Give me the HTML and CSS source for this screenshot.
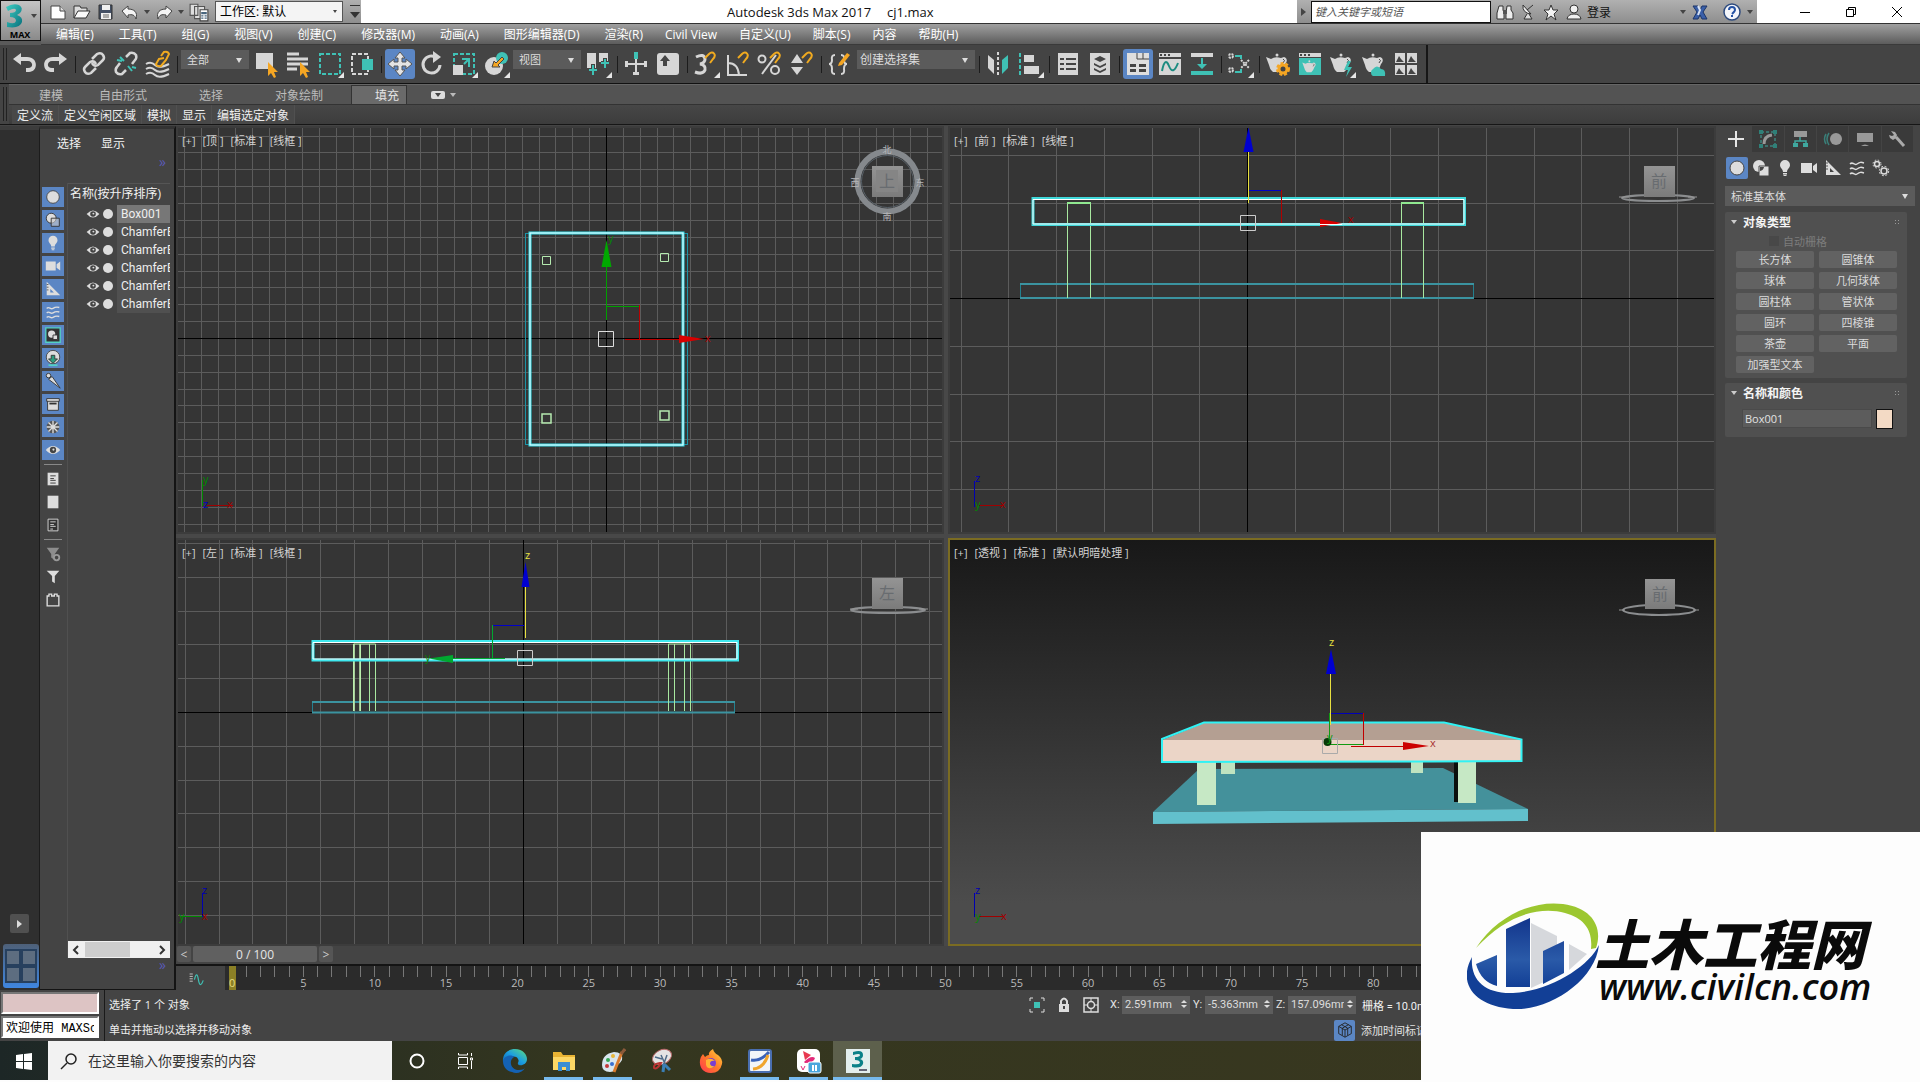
FILE: index.html
```html
<!DOCTYPE html>
<html lang="zh-CN">
<head>
  <meta charset="UTF-8" />
  <title>Autodesk 3ds Max 2017 - cj1.max</title>
  <link rel="stylesheet" href="styles.css">
</head>
<body>

<!-- shared icons -->
<svg class="defs" aria-hidden="true">
  <defs>
    <linearGradient id="gTeal" x1="0" y1="0" x2="1" y2="1"><stop offset="0" stop-color="#3fd0c4"/><stop offset="1" stop-color="#08707c"/></linearGradient>
    <linearGradient id="gCube" x1="0" y1="0" x2="0" y2="1"><stop offset="0" stop-color="#949494"/><stop offset="1" stop-color="#7b7b7b"/></linearGradient>
    <linearGradient id="gBlue" x1="0" y1="0" x2="0" y2="1"><stop offset="0" stop-color="#12358c"/><stop offset="0.6" stop-color="#2a5aa8"/><stop offset="1" stop-color="#123f96"/></linearGradient>
    <linearGradient id="gEdge" x1="0" y1="1" x2="1" y2="0"><stop offset="0" stop-color="#0c59a4"/><stop offset="0.5" stop-color="#1b9de2"/><stop offset="1" stop-color="#5fe07a"/></linearGradient>
    <linearGradient id="gFox" x1="0" y1="1" x2="1" y2="0"><stop offset="0" stop-color="#ff3750"/><stop offset="0.5" stop-color="#ff7a2a"/><stop offset="1" stop-color="#ffd93c"/></linearGradient>
  </defs>
  <symbol id="i-circle" viewBox="0 0 20 20"><circle cx="10" cy="10" r="7" fill="#ddd" stroke="#444"/></symbol>
  <symbol id="i-shapes" viewBox="0 0 20 20"><circle cx="8" cy="8" r="6" fill="#ddd"/><path d="M8 8h10v10H8z" fill="#ddd" stroke="#444"/><path d="M9 13V9h4a5 5 0 0 1-4 4z" fill="#444"/></symbol>
  <symbol id="i-bulb" viewBox="0 0 20 20"><path d="M10 2a5 5 0 0 1 5 5c0 3-3 4-3 7H8c0-3-3-4-3-7a5 5 0 0 1 5-5z" fill="#ddd"/><path d="M8 15h4v1.500H8zM8.500 17h3v1h-3z" fill="#ddd"/></symbol>
  <symbol id="i-camera" viewBox="0 0 20 20"><path d="M2 5h11v10H2zM14 8l4-3v10l-4-3z" fill="#ddd"/></symbol>
  <symbol id="i-ruler" viewBox="0 0 20 20"><path d="M3 2v15h15zM7 10l4 4H7z" fill="#ddd" fill-rule="evenodd"/><path d="M3 5h2M3 8h2M3 11h2" stroke="#555"/></symbol>
  <symbol id="i-waves" viewBox="0 0 20 20"><path d="M3 6c3-3 4 2 7 0s4-2 7-1M3 11c3-3 4 2 7 0s4-2 7-1M3 16c3-3 4 2 7 0s4-2 7-1" fill="none" stroke="#ddd" stroke-width="1.500"/></symbol>
  <symbol id="i-gears" viewBox="0 0 20 20"><g fill="none" stroke="#ddd"><circle cx="6" cy="6" r="2.500" stroke-width="1.500"/><circle cx="6" cy="6" r="4" stroke-dasharray="1.500 1.700"/><circle cx="13" cy="13" r="3" stroke-width="1.500"/><circle cx="13" cy="13" r="4.700" stroke-dasharray="2 1.700"/></g></symbol>
  <symbol id="i-eye" viewBox="0 0 20 20"><path d="M2 10q8-9 16 0q-8 9-16 0z" fill="#ddd"/><circle cx="10" cy="10" r="3.500" fill="#444"/><circle cx="10.500" cy="9.500" r="1.200" fill="#ddd"/></symbol>
  <symbol id="i-teapot" viewBox="0 0 28 28"><path d="M2 7l5 2q4-3 10-1l3-1c3 1 4 4 1 7q-2 6-5 8H9q-3-2-4-7z" fill="#d6d6d6"/><path d="M19 9q3 1 0 4" fill="none" stroke="#444"/><circle cx="13" cy="5" r="1.500" fill="#d6d6d6"/></symbol>
  <symbol id="i-chev" viewBox="0 0 28 28"><path d="M28 22v6h-6z" fill="#e6e6e6"/></symbol>
  <symbol id="i-magnet" viewBox="0 0 14 14"><path d="M2 7l4-4c4-4 8 1 4 5l-3 4" fill="none" stroke="#f0aa20" stroke-width="2"/></symbol>
  <symbol id="i-curve" viewBox="0 0 20 20"><path d="M2 5h4M2 8h4M2 11h4M2 14h4" stroke="#ddd"/><path d="M8 12q3-12 5 0t6 1" fill="none" stroke="#3fc1b5" stroke-width="1.500"/></symbol>
</svg>

<div class="app">
<header class="header">
  <button class="app-btn" type="button" aria-label="MAX">
    <svg width="28" height="28" viewBox="0 0 28 28"><path d="M5 5Q12 1 18 3q5 3 1 8l-3 2q6 2 5 7-2 7-15 5V20q8 3 9-1 0-4-6-4v-4q6 0 6-3-1-3-8 1z" fill="url(#gTeal)"/></svg>
    <span>MAX</span>
    <i class="tri"></i>
  </button>
  <div class="header-main">
    <div class="titlebar">
      <div class="quick">
        <button type="button" aria-label="新建"><svg width="18" height="18" viewBox="0 0 18 18"><path d="M2 3h9l5 5v8H2z" fill="#fff" stroke="#444"/><path d="M11 3v5h5" fill="#ddd" stroke="#444"/></svg></button>
        <button type="button" aria-label="打开"><svg width="18" height="18" viewBox="0 0 18 18"><path d="M1 15V3h6l1 2h6v3" fill="#ddd" stroke="#333"/><path d="M1 15l4-7h12l-4 7z" fill="#fafafa" stroke="#333"/></svg></button>
        <button type="button" aria-label="保存"><svg width="18" height="18" viewBox="0 0 18 18"><path d="M2 2h13v14H2z" fill="#445065" stroke="#333"/><path d="M5 2h8v5H5zM4 10h10v6H4z" fill="#f0f0f0"/><path d="M6 12h6M6 14h6" stroke="#666"/></svg></button>
        <button type="button" aria-label="撤消"><svg width="18" height="18" viewBox="0 0 18 18"><path d="M1 8l6-5v3c6 0 10 3 8 10-1-4-4-5-8-4v3z" fill="#f5f5f5" stroke="#444"/></svg></button>
        <i class="tri"></i>
        <button type="button" aria-label="重做"><svg width="18" height="18" viewBox="0 0 18 18"><path d="M17 8l-6-5v3C5 6 1 9 3 16c1-4 4-5 8-4v3z" fill="#f5f5f5" stroke="#444"/></svg></button>
        <i class="tri"></i>
        <button type="button" aria-label="项目"><svg width="20" height="20" viewBox="0 0 18 18"><path d="M1 2h7v10H1zM5 4h9v11H5z" fill="#ddd" stroke="#555"/><path d="M10 7h7v10h-7z" fill="#fff" stroke="#444"/><path d="M11 9h5v2h-5zM11 12h2v1h-2zM14 12h2v1h-2zM11 14h2v1h-2zM14 14h2v1h-2z" fill="#48657d"/></svg></button>
        <span class="sel sel-light"><select aria-label="工作区"><option>工作区: 默认</option></select></span>
        <button class="more" type="button" aria-label="更多"><i class="tri tri-bar"></i></button>
      </div>
      <div class="title"><span>Autodesk 3ds Max 2017</span><span>cj1.max</span></div>
      <div class="info">
        <i class="tri tri-right"></i>
        <input type="text" aria-label="搜索" placeholder="键入关键字或短语">
        <button type="button" aria-label="查找"><svg width="18" height="18" viewBox="0 0 18 18"><path d="M3 3h4v4l1 3v6H1v-6zM11 3h4v4l2 3v6h-7v-6z" fill="#eee" stroke="#333"/><path d="M7 7h4v4H7z" fill="#555"/></svg></button>
        <button type="button" aria-label="通讯"><svg width="18" height="18" viewBox="0 0 18 18"><path d="M4 2q-1 8 8 9z" fill="#eee" stroke="#333"/><path d="M8 7l6-5M8 11l-3 5h8l-3-5" fill="#ddd" stroke="#333"/></svg></button>
        <button type="button" aria-label="收藏"><svg width="18" height="18" viewBox="0 0 18 18"><path d="M9 2l2 5h5l-4 4 2 6-5-4-5 4 2-6-4-4h5z" fill="#f4f4f4" stroke="#333"/></svg></button>
        <button class="login" type="button"><svg width="18" height="18" viewBox="0 0 18 18"><circle cx="9" cy="6" r="4" fill="#f0f0f0" stroke="#333"/><path d="M2 16q1-5 7-5t7 5z" fill="#f0f0f0" stroke="#333"/></svg>登录</button>
        <i class="tri"></i>
        <button class="exchange" type="button" aria-label="Exchange"><svg width="18" height="18" viewBox="0 0 18 18"><path d="M2 3h5l2 4 2-4h5l-4 6 4 7h-5l-2-4-2 4H2l4-7z" fill="#3a5fa8" stroke="#1c3568"/><path d="M7 3l2 4-2 5" fill="none" stroke="#d8e2f2" stroke-width="2"/></svg></button>
        <button type="button" aria-label="帮助"><svg width="20" height="20" viewBox="0 0 20 20"><circle cx="10" cy="10" r="8" fill="#f4f6fb" stroke="#2d4a7d" stroke-width="1.500"/><path d="M7 8q0-3 3-3t3 3q0 1-3 4m0 1v2" fill="none" stroke="#2552a5" stroke-width="2"/></svg></button>
        <i class="tri"></i>
      </div>
      <div class="winctl">
        <button type="button" aria-label="最小化"><svg width="12" height="12" viewBox="0 0 12 12"><path d="M1 6.500h10" stroke="#000"/></svg></button>
        <button type="button" aria-label="还原"><svg width="12" height="12" viewBox="0 0 12 12"><path d="M1.500 3.500h7v7h-7zM3.500 3V1.500h7v7H9" fill="none" stroke="#000"/></svg></button>
        <button type="button" aria-label="关闭"><svg width="12" height="12" viewBox="0 0 12 12"><path d="M1 1l10 10M11 1L1 11" stroke="#000"/></svg></button>
      </div>
    </div>
    <nav class="menubar">
      <div class="menu-group">
        <a href="#">编辑(E)</a><a href="#">工具(T)</a><a href="#">组(G)</a><a href="#">视图(V)</a><a href="#">创建(C)</a><a href="#">修改器(M)</a><a href="#">动画(A)</a><a href="#">图形编辑器(D)</a><a href="#">渲染(R)</a>
      </div>
      <div class="menu-group menu-group-2">
        <a href="#">Civil View</a><a href="#">自定义(U)</a><a href="#">脚本(S)</a><a href="#">内容</a><a href="#">帮助(H)</a>
      </div>
    </nav>
  </div>
</header>

<div class="toolbar">
  <i class="grip"></i>
  <button type="button" aria-label="撤消"><svg viewBox="0 0 28 28"><path d="M3 9l8-6v4h6c12 0 11 15 2 15h-3v-4h2c6 0 5-7 0-7h-7v4z" fill="#d6d6d6"/></svg></button>
  <button type="button" aria-label="重做"><svg viewBox="0 0 28 28"><path d="M25 9l-8-6v4h-6C-1 7 0 22 9 22h3v-4h-2c-6 0-5-7 0-7h7v4z" fill="#d6d6d6"/></svg></button>
  <i class="sep"></i>
  <button type="button" aria-label="链接"><svg viewBox="0 0 28 28"><g fill="none" stroke="#d6d6d6" stroke-width="2.500"><path d="M12 9l5-5q4-2 6 1 2 3 0 5l-5 5q-4 2-6-2"/><path d="M16 18l-5 5q-4 2-6-1-2-3 0-5l5-5q4-2 6 2"/></g></svg></button>
  <button type="button" aria-label="断开链接"><svg viewBox="0 0 28 28"><g fill="none" stroke="#d6d6d6" stroke-width="2.500"><path d="M14 7l4-4q4-1 6 2 1 3-1 5l-3 4"/><path d="M14 20l-4 4q-4 1-6-2-1-3 1-5l3-4"/></g><path d="M8 7l4 4M16 16l4 5M20 17l4 1M5 10l5 1" stroke="#3fc1b5" stroke-width="2"/></svg></button>
  <button type="button" aria-label="绑定"><svg viewBox="0 0 28 28"><path d="M2 14q5-3 9 1t14-1M2 19q5-3 9 1t14-1M2 24q5-3 9 1t14-1" fill="none" stroke="#d6d6d6" stroke-width="2"/><path d="M17 6l3-4q4-1 5 2l-3 6-5 6q-4 1-5-2l3-5 5-1" fill="none" stroke="#f0aa20" stroke-width="2"/></svg></button>
  <i class="sep"></i>
  <span class="sel sel-filter"><select aria-label="选择过滤器"><option>全部</option></select></span>
  <button type="button" aria-label="选择对象"><svg viewBox="0 0 28 28"><path d="M4 3h17v16H4z" fill="#d6d6d6"/><path d="M16 12v14l3-3 3 5 2-1-2-5h4z" fill="#f5a623"/></svg></button>
  <button type="button" aria-label="按名称选择"><svg viewBox="0 0 28 28"><path d="M3 4h12M3 9h21M3 14h21M3 19h10" stroke="#d6d6d6" stroke-width="3"/><path d="M16 12v14l3-3 3 5 2-1-2-5h4z" fill="#f5a623"/></svg></button>
  <button type="button" aria-label="矩形选择区域"><svg viewBox="0 0 28 28"><path d="M4 4h20v20H4z" fill="none" stroke="#3fc1b5" stroke-width="2" stroke-dasharray="4 2"/><use href="#i-chev"/></svg></button>
  <button type="button" aria-label="窗口/交叉"><svg viewBox="0 0 28 28"><path d="M4 4h16v20H4z" fill="none" stroke="#d6d6d6" stroke-width="2" stroke-dasharray="4 2"/><path d="M14 9h11v11H14z" fill="#3fc1b5"/></svg></button>
  <i class="sep"></i>
  <button class="on" type="button" aria-label="选择并移动"><svg viewBox="0 0 28 28"><path d="M14 2l5 6h-3v4h4V9l6 5-6 5v-3h-4v4h3l-5 6-5-6h3v-4H8v3l-6-5 6-5v3h4V8H9z" fill="#e4e4e4" stroke="#555"/></svg></button>
  <button type="button" aria-label="选择并旋转"><svg viewBox="0 0 28 28"><path d="M19 8a8.500 8.500 0 1 0 3 7" fill="none" stroke="#d6d6d6" stroke-width="3"/><path d="M15 1l8 6-8 6z" fill="#d6d6d6"/></svg></button>
  <button type="button" aria-label="选择并缩放"><svg viewBox="0 0 28 28"><path d="M4 4h20v20H4z" fill="none" stroke="#3fc1b5" stroke-width="2" stroke-dasharray="4 2"/><path d="M3 15h10v10H3z" fill="#d6d6d6"/><path d="M12 9h7v8M14 14l5-5" fill="none" stroke="#3fc1b5" stroke-width="2"/><use href="#i-chev"/></svg></button>
  <button type="button" aria-label="选择并放置"><svg viewBox="0 0 28 28"><circle cx="12" cy="16" r="9" fill="#d6d6d6"/><circle cx="20" cy="8" r="6" fill="#3fc1b5"/><path d="M10 17l2-6 2 2 6-6 2 2-6 6 2 2z" fill="#f5a623" stroke="#444"/><use href="#i-chev"/></svg></button>
  <span class="sel sel-filter"><select aria-label="参考坐标系"><option>视图</option></select></span>
  <button type="button" aria-label="使用轴点中心"><svg viewBox="0 0 28 28"><path d="M3 3h9v15H3zM15 3h9v9h-9z" fill="#d6d6d6"/><path d="M9 14v11M5 20h8M21 8v11M17 13h8" stroke="#444" stroke-width="4"/><path d="M9 15v10M5 20h8M21 9v9M17 13h8" stroke="#3fc1b5" stroke-width="2"/><use href="#i-chev"/></svg></button>
  <i class="sep"></i>
  <button type="button" aria-label="选择并操纵"><svg viewBox="0 0 28 28"><path d="M14 8v17M4 14h20" stroke="#d6d6d6" stroke-width="2"/><path d="M3 11h3v6H3zM22 11h3v6h-3zM11 22h6v3h-6z" fill="#d6d6d6"/><path d="M12 2h4v7h-4z" fill="#3fc1b5"/></svg></button>
  <button type="button" aria-label="键盘快捷键覆盖"><svg viewBox="0 0 28 28"><rect x="3" y="3" width="22" height="22" rx="3" fill="#d6d6d6"/><path d="M11 5l5 6h-3v5H9v-5H6z" fill="#444"/></svg></button>
  <i class="sep"></i>
  <button type="button" aria-label="捕捉开关"><svg viewBox="0 0 28 28"><path d="M4 7q8-4 9 2 0 4-5 5 6 1 5 6-2 5-10 2" fill="none" stroke="#d6d6d6" stroke-width="3"/><use href="#i-magnet" x="11" y="1" width="14" height="14"/><use href="#i-chev"/></svg></button>
  <button type="button" aria-label="角度捕捉"><svg viewBox="0 0 28 28"><path d="M4 5v20h19M4 13q10 0 11 12" fill="none" stroke="#d6d6d6" stroke-width="2"/><use href="#i-magnet" x="12" y="1" width="14" height="14"/></svg></button>
  <button type="button" aria-label="百分比捕捉"><svg viewBox="0 0 28 28"><path d="M20 5L6 24" stroke="#d6d6d6" stroke-width="2"/><circle cx="6" cy="9" r="3.500" fill="none" stroke="#d6d6d6" stroke-width="2"/><circle cx="19" cy="20" r="4" fill="none" stroke="#d6d6d6" stroke-width="2"/><use href="#i-magnet" x="12" y="1" width="14" height="14"/></svg></button>
  <button type="button" aria-label="微调器捕捉"><svg viewBox="0 0 28 28"><path d="M3 13l6-9 6 9zM3 17h12l-6 8z" fill="#d6d6d6"/><use href="#i-magnet" x="12" y="1" width="14" height="14"/></svg></button>
  <i class="sep"></i>
  <button type="button" aria-label="编辑命名选择集"><svg viewBox="0 0 28 28"><path d="M9 5q-4 0-3 5 0 4-3 4 3 0 3 5-1 5 3 5M15 5q4 0 3 5 0 4 3 4-3 0-3 5 1 5-3 5" fill="none" stroke="#d6d6d6" stroke-width="2"/><path d="M13 13l8-10 3 2-8 10-4 1z" fill="#f5a623"/></svg></button>
  <span class="sel sel-named"><select aria-label="创建选择集"><option>创建选择集</option></select></span>
  <i class="sep"></i>
  <button type="button" aria-label="镜像"><svg viewBox="0 0 28 28"><path d="M4 5l6 5v14l-6-6z" fill="#d6d6d6"/><path d="M24 5l-6 5v14l6-6z" fill="#3fc1b5"/><path d="M14 2v24" stroke="#d6d6d6" stroke-width="2" stroke-dasharray="3 2"/></svg></button>
  <button type="button" aria-label="对齐"><svg viewBox="0 0 28 28"><path d="M4 3v23" stroke="#3fc1b5" stroke-width="2" stroke-dasharray="4 2"/><path d="M8 5h10v7H8zM8 16h15v8H8z" fill="#d6d6d6"/><use href="#i-chev"/></svg></button>
  <i class="sep"></i>
  <button type="button" aria-label="场景资源管理器"><svg viewBox="0 0 28 28"><path d="M4 3h20v22H4z" fill="#d6d6d6"/><path d="M6 9h4M12 9h10M6 14h4M12 14h10M6 19h4M12 19h10" stroke="#444" stroke-width="2"/></svg></button>
  <button type="button" aria-label="层资源管理器"><svg viewBox="0 0 28 28"><path d="M4 3h20v22H4z" fill="#d6d6d6"/><path d="M14 6l6 3-6 3-6-3zM8 13l6 3 6-3v2l-6 3-6-3zM8 18l6 3 6-3v2l-6 3-6-3z" fill="#444"/></svg></button>
  <i class="sep"></i>
  <button class="on" type="button" aria-label="功能区"><svg viewBox="0 0 28 28"><path d="M3 3h22v22H3z" fill="#dedede"/><path d="M13 3v6h12M19 3v6" fill="none" stroke="#444"/><path d="M6 14h6v3H6zM15 14h7v3h-7zM6 19h6v3H6zM15 19h7v3h-7z" fill="#444"/></svg></button>
  <button type="button" aria-label="曲线编辑器"><svg viewBox="0 0 28 28"><path d="M3 3h22v4H3zM3 9h22v16H3z" fill="#d6d6d6"/><path d="M4 4h2v2H4zM8 4h2v2H8zM12 4h2v2h-2z" fill="#444"/><path d="M6 21q3-15 7-5t9-3" fill="none" stroke="#1c8b80" stroke-width="2"/></svg></button>
  <button type="button" aria-label="摄影表"><svg viewBox="0 0 28 28"><path d="M3 3h22v4H3z" fill="#d6d6d6"/><path d="M3 21h22v4H3zM13 8h2v6h4l-5 5-5-5h4z" fill="#3fc1b5"/></svg></button>
  <i class="sep"></i>
  <button type="button" aria-label="材质编辑器"><svg viewBox="0 0 28 28"><g fill="none" stroke="#d6d6d6" stroke-width="2" stroke-dasharray="2 1"><circle cx="5" cy="6" r="2"/><circle cx="5" cy="20" r="2"/><path d="M15 10l8 8M23 10l-8 8"/></g><path d="M9 6h6v3M9 22h6v-3" fill="none" stroke="#3fc1b5" stroke-width="2"/><use href="#i-chev"/></svg></button>
  <i class="sep"></i>
  <button type="button" aria-label="渲染设置"><svg viewBox="0 0 28 28"><use href="#i-teapot"/><circle cx="19" cy="19" r="4" fill="#444" stroke="#f5a623" stroke-width="3"/><circle cx="19" cy="19" r="6" fill="none" stroke="#f5a623" stroke-width="2" stroke-dasharray="3 2"/></svg></button>
  <button type="button" aria-label="渲染帧窗口"><svg viewBox="0 0 28 28"><path d="M3 3h22v4H3z" fill="#d6d6d6"/><path d="M4 4h2v2H4zM8 4h2v2H8zM12 4h2v2h-2z" fill="#444"/><path d="M3 8h22v17H3z" fill="#3fc1b5"/><use href="#i-teapot" x="5" y="8" width="18" height="18"/></svg></button>
  <button type="button" aria-label="渲染产品"><svg viewBox="0 0 28 28"><use href="#i-teapot"/><path d="M20 11l-4 9h4l-2 7 6-10h-4l3-6z" fill="#3fc1b5"/><use href="#i-chev"/></svg></button>
  <button type="button" aria-label="云渲染"><svg viewBox="0 0 28 28"><use href="#i-teapot"/><path d="M13 26a4 4 0 0 1 0-7q4-5 8 0 5 0 4 7z" fill="#3fc1b5"/></svg></button>
  <button type="button" aria-label="库"><svg viewBox="0 0 28 28"><path d="M3 3h10v10H3zM15 3h10v10H15zM3 15h10v10H3zM15 15h10v10H15z" fill="#d6d6d6"/><path d="M4 12l3-6 2 3 3 3zM16 12l3-6 2 3 3 3zM4 24l3-6 2 3 3 3zM16 24l3-6 2 3 3 3z" fill="#444"/></svg></button>
  <i class="toolbar-end"></i>
</div>

<div class="ribbon">
  <i class="grip"></i>
  <div class="ribbon-main">
    <div class="ribbon-tabs">
      <button type="button">建模</button><button type="button">自由形式</button><button type="button">选择</button><button type="button">对象绘制</button><button class="current" type="button">填充</button>
      <button class="ribbon-min" type="button" aria-label="最小化功能区"><b><i class="tri"></i></b><i class="tri"></i></button>
    </div>
    <div class="ribbon-row">
      <button type="button">定义流</button><button type="button">定义空闲区域</button><button type="button">模拟</button><button type="button">显示</button><button type="button">编辑选定对象</button>
    </div>
  </div>
</div>

<div class="main">
  <div class="strip">
    <button class="play" type="button" aria-label="展开"><i class="tri tri-right"></i></button>
    <button class="layout" type="button" aria-label="视口布局"><svg width="32" height="34" viewBox="0 0 32 34"><path d="M1 1h14v15H1zM17 1h14v15H17zM1 18h14v15H1zM17 18h14v15H17z" fill="#5d6d80" stroke="#27405e" stroke-width="2"/></svg></button>
  </div>

  <aside class="explorer">
    <div class="explorer-menu"><a href="#">选择</a><a href="#">显示</a></div>
    <div class="chevrons">&raquo;</div>
    <div class="explorer-body">
      <div class="filters">
        <button class="on" type="button" aria-label="几何体"><svg><use href="#i-circle"/></svg></button>
        <button class="on" type="button" aria-label="图形"><svg viewBox="0 0 20 20"><circle cx="8" cy="8" r="5.500" fill="#ddd" stroke="#333"/><path d="M8 8h9v9H8z" fill="#ccc" fill-opacity=".6" stroke="#333"/></svg></button>
        <button class="on" type="button" aria-label="灯光"><svg><use href="#i-bulb"/></svg></button>
        <button class="on" type="button" aria-label="摄影机"><svg><use href="#i-camera"/></svg></button>
        <button class="on" type="button" aria-label="辅助对象"><svg><use href="#i-ruler"/></svg></button>
        <button class="on" type="button" aria-label="空间扭曲"><svg><use href="#i-waves"/></svg></button>
        <button class="on" type="button" aria-label="组"><svg viewBox="0 0 20 20"><path d="M2 2h16v16H2z" fill="#333" stroke="#54d1c4" stroke-width="1.500"/><circle cx="8.500" cy="9" r="4" fill="#ddd"/><path d="M10 10h5v5h-5z" fill="#ddd" stroke="#333"/></svg></button>
        <button class="on" type="button" aria-label="外部参照"><svg viewBox="0 0 20 20"><circle cx="10" cy="9" r="7.500" fill="#ddd" stroke="#444"/><path d="M8 7h4v4h3l-5 5-5-5h3z" fill="#2f9d7f" stroke="#333"/><path d="M5 18h10" stroke="#54d1c4" stroke-width="2"/></svg></button>
        <button class="on" type="button" aria-label="骨骼"><svg viewBox="0 0 20 20"><circle cx="5" cy="4" r="2.500" fill="#ddd" stroke="#333"/><path d="M5 8l4-3 9 13z" fill="#ddd" stroke="#333"/></svg></button>
        <button class="on" type="button" aria-label="容器"><svg viewBox="0 0 20 20"><path d="M4 5h12v12H4z" fill="#ddd" stroke="#333"/><path d="M3 4h14v3H3z" fill="#ddd" stroke="#333"/><path d="M6 9.500h8" stroke="#333" stroke-width="2"/></svg></button>
        <button class="on" type="button" aria-label="冻结"><svg viewBox="0 0 20 20"><circle cx="10" cy="10" r="7" fill="#555"/><path d="M10 3v14M3 10h14M5 5l10 10M15 5L5 15" stroke="#ddd" stroke-width="1.500"/></svg></button>
        <button class="on" type="button" aria-label="隐藏"><svg><use href="#i-eye"/></svg></button>
        <i class="hr"></i>
        <button type="button" aria-label="全部"><svg viewBox="0 0 20 20"><path d="M4 3h12v14H4z" fill="#ddd"/><path d="M7 6.500h6M7 9.500h4M7 11.500h6M7 14.500h6" stroke="#333"/></svg></button>
        <button type="button" aria-label="无"><svg viewBox="0 0 20 20"><path d="M4 3h12v14H4z" fill="#ddd"/></svg></button>
        <button type="button" aria-label="反转"><svg viewBox="0 0 20 20"><path d="M4.500 3.500h11v13h-11z" fill="#333" stroke="#ddd"/><path d="M7 6.500h6M7 9.500h4M7 11.500h6M7 14.500h3" stroke="#ddd"/></svg></button>
        <i class="hr"></i>
        <button type="button" aria-label="过滤器设置"><svg viewBox="0 0 20 20"><path d="M3 3h14l-5 7v7l-4-3v-4z" fill="#8d8d8d"/><circle cx="14" cy="14" r="3" fill="#444" stroke="#999" stroke-width="2"/></svg></button>
        <button type="button" aria-label="过滤器"><svg viewBox="0 0 20 20"><path d="M3 3h14l-5 6v8l-3-2V9z" fill="#ddd"/></svg></button>
        <button type="button" aria-label="插件"><svg viewBox="0 0 20 20"><path d="M3.500 16.500v-11h2v-2h3v2h3v-2h3v2h2v11z" fill="none" stroke="#ddd" stroke-width="1.500"/></svg></button>
      </div>
      <div class="tree">
        <div class="tree-head">名称(按升序排序)</div>
        <ul>
          <li class="selected"><svg><use href="#i-eye"/></svg><i class="dot"></i><span>Box001</span></li>
          <li><svg><use href="#i-eye"/></svg><i class="dot"></i><span>ChamferBox001</span></li>
          <li><svg><use href="#i-eye"/></svg><i class="dot"></i><span>ChamferBox002</span></li>
          <li><svg><use href="#i-eye"/></svg><i class="dot"></i><span>ChamferBox003</span></li>
          <li><svg><use href="#i-eye"/></svg><i class="dot"></i><span>ChamferBox004</span></li>
          <li><svg><use href="#i-eye"/></svg><i class="dot"></i><span>ChamferBox005</span></li>
        </ul>
        <div class="hscroll">
          <svg width="16" height="17" viewBox="0 0 16 17"><path d="M10 5L6 9l4 4" fill="none" stroke="#333" stroke-width="2"/></svg>
          <i></i>
          <svg width="16" height="17" viewBox="0 0 16 17"><path d="M6 5l4 4-4 4" fill="none" stroke="#333" stroke-width="2"/></svg>
        </div>
      </div>
    </div>
    <div class="chevrons chevrons-low">&raquo;</div>
  </aside>

  <section class="center">
    <div class="viewports">
      <div class="viewport">
        <div class="vp-label"><button type="button">[+]</button><button type="button">[顶 ]</button><button type="button">[标准 ]</button><button type="button">[线框 ]</button></div>
        <svg class="scene" viewBox="178 128 764 404" preserveAspectRatio="xMidYMid slice">
          <g class="grid" data-origin="606,338" data-step="16.87"></g>
          <rect x="525.500" y="233.500" width="162" height="211" fill="none" stroke="#1c93a5"/>
          <rect x="530" y="233" width="153" height="212" fill="none" stroke="#35dbe8" stroke-width="3"/>
          <rect x="530" y="233" width="153" height="212" fill="none" stroke="#fff"/>
          <g fill="none" stroke="#b5eab0"><path d="M542.500 256.500h8v8h-8zM660.500 253.500h8v8h-8z"/><path d="M542 414h9v9h-9zM660 411h9v9h-9z" stroke-width="1.500"/></g>
          <g fill="none"><path d="M606.500 320v-54M606 306.500h33" stroke="#00a000"/><path d="M639.500 305v34M625 339.500h55" stroke="#b80000"/><path d="M598.500 331.500h15v15h-15z" stroke="#ddd"/></g>
          <path d="M606.500 240l5 27h-10z" fill="#00a800"/><path d="M679 335v8l25-4z" fill="#d80000"/>
          <text x="608" y="242" fill="#088008">y</text><text x="705" y="342" fill="#b00000">x</text>
          <g fill="none"><path d="M202.500 480v26" stroke="#008800"/><path d="M207 505.500h26" stroke="#a00000"/></g>
          <text x="203" y="483" fill="#008800">y</text><text x="203" y="508" fill="#0000c0">z</text><text x="227" y="508" fill="#a00000">x</text>
          <circle cx="887.500" cy="181.500" r="30" fill="none" stroke="#85898d" stroke-width="6"/><circle cx="887.500" cy="181.500" r="26" fill="none" stroke="#59626a"/>
          <path d="M872 166h31v31h-31z" fill="url(#gCube)"/><path d="M876 170h22v22h-22z" fill="#858585"/>
          <text class="cube-t" x="887" y="187">上</text>
          <g class="compass"><text x="887" y="153">北</text><text x="855" y="186">西</text><text x="920" y="186">东</text><text x="887" y="220">南</text></g>
        </svg>
      </div>
      <div class="viewport">
        <div class="vp-label"><button type="button">[+]</button><button type="button">[前 ]</button><button type="button">[标准 ]</button><button type="button">[线框 ]</button></div>
        <svg class="scene" viewBox="950 128 764 404" preserveAspectRatio="xMidYMid slice">
          <g class="grid" data-origin="1247,298" data-step="47.75"></g>
          <path d="M1020.500 283.500h453v15h-453z" fill="none" stroke="#23808f"/><path d="M1020 284h454M1020 298h454" stroke="#3b93a0" stroke-width="2"/>
          <path d="M1067.500 298v-95h23v95M1401.500 298v-95h22v95" fill="none" stroke="#a8e8a0"/>
          <path d="M1067 203h24M1401 203h23" stroke="#90e890" stroke-width="2"/>
          <path d="M1033 198.500h431.500v26H1033z" fill="none" stroke="#3fd8da" stroke-width="3"/><path d="M1033 199.500h431v24.500h-431z" fill="none" stroke="#fff"/>
          <g fill="none"><path d="M1248.500 203v-52" stroke="#e8e040"/><path d="M1249 190.500h32" stroke="#0000c8"/><path d="M1281.500 190v33" stroke="#b00000"/><path d="M1240.500 215.500h15v15h-15z" stroke="#ccc"/></g>
          <path d="M1248.500 127l5 25h-10z" fill="#0000d0"/><path d="M1320 219v8l22-4z" fill="#d80000"/><path d="M1320 224.500h22" stroke="#fff"/>
          <text x="1348" y="223" fill="#a00000">x</text>
          <g fill="none"><path d="M974.500 481v26" stroke="#0000b0"/><path d="M979 505.500h25" stroke="#a00000"/></g>
          <text x="975" y="482" fill="#0000b0">z</text><text x="975" y="508" fill="#008800">y</text><text x="1000" y="508" fill="#a00000">x</text>
          <ellipse cx="1658" cy="198" rx="36" ry="3" fill="none" stroke="#8b8d8f" stroke-width="2"/><path d="M1619 197h10M1688 197h9" stroke="#999"/>
          <path d="M1644 166h31v31h-31z" fill="url(#gCube)"/><text class="cube-t" x="1659" y="187">前</text>
        </svg>
      </div>
      <div class="viewport">
        <div class="vp-label"><button type="button">[+]</button><button type="button">[左 ]</button><button type="button">[标准 ]</button><button type="button">[线框 ]</button></div>
        <svg class="scene" viewBox="178 540 764 404" preserveAspectRatio="xMidYMid slice">
          <g class="grid" data-origin="523,712" data-step="33.82"></g>
          <path d="M312.500 702.500h422v10h-422z" fill="none" stroke="#23808f"/><path d="M312 702h423M312 712.500h423" stroke="#3b93a0" stroke-width="2"/>
          <path d="M353.500 711v-67h22v67M360.500 644v67M369.500 644v67M668.500 711v-67h22v67M674.500 644v67M684.500 644v67" fill="none" stroke="#a8e8a0"/><path d="M354 644v67M360 644v67" stroke="#c0f0b0" stroke-width="1.500"/>
          <path d="M313 641.500h424.500v18.500H313z" fill="none" stroke="#3fe8ee" stroke-width="3"/><path d="M313 642.500h424v16.500H313z" fill="none" stroke="#fff"/>
          <g fill="none"><path d="M525.500 638v-52" stroke="#e8e040"/><path d="M493 625.500h31" stroke="#0000c8"/><path d="M492.500 625v33M505 658.500h-54" stroke="#00a830"/><path d="M517.500 650.500h15v15h-15z" stroke="#ccc"/></g>
          <path d="M525.500 562l4 25h-8z" fill="#0000d0"/><path d="M453 655v8l-24-4.500z" fill="#00a830"/>
          <text x="525" y="559" fill="#e8e040">z</text><text x="425" y="661" fill="#088008">y</text>
          <g fill="none"><path d="M202.500 893v24" stroke="#0000b0"/><path d="M181 916.500h21" stroke="#008800"/></g>
          <text x="202" y="894" fill="#0000b0">z</text><text x="179" y="920" fill="#008800">y</text><text x="202" y="920" fill="#a00000">x</text>
          <ellipse cx="888" cy="610" rx="37" ry="3" fill="none" stroke="#8b8d8f" stroke-width="2"/><path d="M850 609h8M919 609h9" stroke="#999"/>
          <path d="M872 578h31v31h-31z" fill="url(#gCube)"/><text class="cube-t" x="887" y="599">左</text>
        </svg>
      </div>
      <div class="viewport active">
        <div class="vp-label"><button type="button">[+]</button><button type="button">[透视 ]</button><button type="button">[标准 ]</button><button type="button">[默认明暗处理 ]</button></div>
        <svg class="scene" viewBox="950 540 764 404" preserveAspectRatio="xMidYMid slice">
          <path d="M1153 812l46-43 244-1 85 41z" fill="#44919b"/><path d="M1153 812l375-3v12l-375 3z" fill="#62c0cc"/>
          <path d="M1221 761h14v13h-14zM1411 761h12v12h-12z" fill="#bfe3c0"/>
          <path d="M1454 761h4v41h-4z" fill="#0b0f0d"/>
          <path d="M1197 761h19v44h-19zM1458 761h18v42h-18z" fill="#c6e8c5"/>
          <path d="M1162 740l42-17h240l77 16v1z" fill="#b49f92"/><path d="M1162 740h359v21l-359 1z" fill="#ebd5c7"/>
          <path d="M1162 762v-23l42-16.500h240l77.500 17V761l-90 .500z" fill="none" stroke="#30f2f4" stroke-width="2"/>
          <g fill="none"><path d="M1330.500 725v-52" stroke="#e8e040"/><path d="M1331 713.500h32" stroke="#0000b8"/><path d="M1363.500 713v32M1351 746.500h54" stroke="#c00000"/><path d="M1329.500 713v29M1330 744.500h33" stroke="#129a12"/><path d="M1322.500 738.500h15v15h-15z" stroke="#aaa"/></g>
          <path d="M1331 649l5 25h-10z" fill="#0000d0"/><path d="M1403 742v8l26-4z" fill="#cc0000"/><circle cx="1327.500" cy="742" r="4" fill="#073a07"/>
          <text x="1329" y="646" fill="#e8e040">z</text><text x="1430" y="747" fill="#a83030">x</text><text x="1327" y="741" fill="#129a12">y</text>
          <g fill="none"><path d="M974.500 893v24" stroke="#0000b0"/><path d="M979 916.500h25" stroke="#a00000"/></g>
          <text x="975" y="894" fill="#0000b0">z</text><text x="975" y="920" fill="#008800">y</text><text x="1001" y="920" fill="#a00000">x</text>
          <ellipse cx="1659" cy="610" rx="36" ry="5" fill="none" stroke="#8b8d8f" stroke-width="2"/><path d="M1619 610h6M1693 610h6" stroke="#999"/>
          <path d="M1645 579h30v30h-30z" fill="url(#gCube)"/><text class="cube-t" x="1660" y="600">前</text>
        </svg>
      </div>
    </div>
    <div class="slider"><button type="button">&lt;</button><button class="thumb" type="button">0 / 100</button><button type="button">&gt;</button></div>
    <div class="track">
      <svg class="track-icon"><use href="#i-curve"/></svg>
      <div class="ruler" id="ruler"></div>
    </div>
  </section>

  <aside class="panel">
    <div class="panel-tabs">
      <button class="current" type="button" aria-label="创建"><svg viewBox="0 0 20 20"><path d="M10 2v16M2 10h16" stroke="#e6e6e6" stroke-width="2"/></svg></button>
      <button type="button" aria-label="修改"><svg viewBox="0 0 20 20"><path d="M3 3h14v14H3z" fill="none" stroke="#3fa79e" stroke-dasharray="3 2"/><path d="M1 1h4v4H1zM15 1h4v4h-4zM1 15h4v4H1zM15 15h4v4h-4z" fill="#2f8078"/><path d="M6 15q0-8 8-9" fill="none" stroke="#999" stroke-width="3"/></svg></button>
      <button type="button" aria-label="层次"><svg viewBox="0 0 20 20"><path d="M4 2h13v6H4z" fill="#999"/><path d="M10 8v4M5 15v-3h11v3" fill="none" stroke="#3fa79e" stroke-width="1.500"/><path d="M3 14h5v4H3zM13 14h5v4h-5z" fill="#3fa79e"/></svg></button>
      <button type="button" aria-label="运动"><svg viewBox="0 0 20 20"><circle cx="13" cy="10" r="6" fill="#999"/><path d="M6 4q-4 6 0 12M3 5q-3 5 0 10" fill="none" stroke="#3a7f79" stroke-width="1.500"/></svg></button>
      <button type="button" aria-label="显示"><svg viewBox="0 0 20 20"><path d="M2 4h16v9H2zM6 17q4-3 8 0z" fill="#999"/></svg></button>
      <button type="button" aria-label="实用程序"><svg viewBox="0 0 20 20"><path d="M9 8l8 9" stroke="#aaa" stroke-width="3"/><path d="M4 2l4 1 2 3-1 3-3 2-3-2-1-3 3 1 2-1z" fill="#aaa"/></svg></button>
    </div>
    <div class="panel-cats">
      <button class="on" type="button" aria-label="几何体"><svg><use href="#i-circle"/></svg></button>
      <button type="button" aria-label="图形"><svg><use href="#i-shapes"/></svg></button>
      <button type="button" aria-label="灯光"><svg><use href="#i-bulb"/></svg></button>
      <button type="button" aria-label="摄影机"><svg><use href="#i-camera"/></svg></button>
      <button type="button" aria-label="辅助对象"><svg><use href="#i-ruler"/></svg></button>
      <button type="button" aria-label="空间扭曲"><svg><use href="#i-waves"/></svg></button>
      <button type="button" aria-label="系统"><svg><use href="#i-gears"/></svg></button>
    </div>
    <span class="sel sel-panel"><select aria-label="类别"><option>标准基本体</option></select></span>
    <div class="rollout">
      <div class="rollout-head"><i class="tri"></i><h2>对象类型</h2><i class="dots"></i></div>
      <div class="autogrid"><input type="checkbox" id="autogrid" disabled><label for="autogrid">自动栅格</label></div>
      <div class="types">
        <button type="button">长方体</button><button type="button">圆锥体</button>
        <button type="button">球体</button><button type="button">几何球体</button>
        <button type="button">圆柱体</button><button type="button">管状体</button>
        <button type="button">圆环</button><button type="button">四棱锥</button>
        <button type="button">茶壶</button><button type="button">平面</button>
        <button type="button">加强型文本</button>
      </div>
    </div>
    <div class="rollout">
      <div class="rollout-head"><i class="tri"></i><h2>名称和颜色</h2><i class="dots"></i></div>
      <div class="namecolor"><input type="text" aria-label="名称" value="Box001"><button class="swatch" type="button" aria-label="颜色"></button></div>
    </div>
  </aside>
</div>

<footer class="status">
  <div class="listener"><input class="pink" type="text" aria-label="宏录制器"><input type="text" aria-label="侦听器" value="欢迎使用 MAXScript"></div>
  <div class="messages"><p>选择了 1 个 对象</p><p>单击并拖动以选择并移动对象</p></div>
  <div class="coords">
    <div class="coords-row">
      <svg width="16" height="16" viewBox="0 0 16 16"><path d="M1 4V1h3M12 1h3v3M15 12v3h-3M4 15H1v-3" fill="none" stroke="#ddd"/><path d="M5 5h6v6H5z" fill="#3fc1b5"/></svg>
      <svg width="16" height="16" viewBox="0 0 16 16"><path d="M3 7h10v8H3z" fill="#ddd"/><path d="M5 7V4q3-5 6 0v3" fill="none" stroke="#ddd" stroke-width="2"/><path d="M8 9v3" stroke="#444" stroke-width="2"/></svg>
      <svg width="16" height="16" viewBox="0 0 16 16"><path d="M1 1h14v14H1z" fill="none" stroke="#ddd" stroke-width="1.500"/><circle cx="8" cy="8" r="3.500" fill="none" stroke="#ddd" stroke-width="1.500"/><path d="M8 1v4M8 11v4M1 8h4M11 8h4" stroke="#ddd"/></svg>
      <label for="cx">X:</label><span class="spin"><input id="cx" type="text" value="2.591mm"></span>
      <label for="cy">Y:</label><span class="spin"><input id="cy" type="text" value="-5.363mm"></span>
      <label for="cz">Z:</label><span class="spin"><input id="cz" type="text" value="157.096mm"></span>
      <span class="gridsize">栅格 = 10.0mm</span>
    </div>
    <div class="coords-row coords-row-2">
      <button class="on" type="button" aria-label="自适应降级"><svg width="18" height="18" viewBox="0 0 20 20"><path d="M10 2l7 4v8l-7 4-7-4V6zM3 6l7 4 7-4M10 10v8M6 4l7 4v8M14 4L7 8v8" fill="none" stroke="#222"/></svg></button>
      <a href="#">添加时间标记</a>
    </div>
  </div>
</footer>

<div class="taskbar">
  <button class="start" type="button" aria-label="开始"><svg width="18" height="18" viewBox="0 0 18 18"><path d="M1 3l7-1v7H1zM9 2l8-1v8H9zM1 10h7v7l-7-1zM9 10h8v8l-8-1z" fill="#fff"/></svg></button>
  <div class="search"><svg width="18" height="18" viewBox="0 0 18 18"><circle cx="11" cy="7" r="5" fill="none" stroke="#222" stroke-width="1.500"/><path d="M7 11l-6 6" stroke="#222" stroke-width="1.500"/></svg><input type="text" aria-label="搜索" placeholder="在这里输入你要搜索的内容"></div>
  <button type="button" aria-label="Cortana"><svg viewBox="0 0 26 26"><circle cx="13" cy="13" r="6.500" fill="none" stroke="#fff" stroke-width="2"/></svg></button>
  <button type="button" aria-label="任务视图"><svg viewBox="0 0 26 26"><path d="M5.500 9.500h9v7h-9zM5.500 5v2h9V5M5.500 21v-2h9v2M18.500 5v3M18.500 13v8M17.500 10h2v2h-2z" fill="none" stroke="#fff"/></svg></button>
  <button type="button" aria-label="Edge"><svg viewBox="0 0 26 26"><path d="M1 14C0 5 7 1 13 1c8 0 12 6 12 10 0 5-5 7-8 6-3-2 1-3-1-6-2-4-9-3-15 3z" fill="url(#gEdge)"/><path d="M1 13c1-5 8-7 11-4-6 4-3 13 5 13 3 0 5-1 6-2-3 5-9 6-13 4-6-1-9-6-9-11z" fill="#1462b4"/></svg></button>
  <button class="open multi" type="button" aria-label="文件资源管理器"><svg viewBox="0 0 26 26"><path d="M2 4h8l2 3h12v15H2z" fill="#e9b434"/><path d="M2 9h22v13H2z" fill="#fcd765"/><path d="M7 14h12v9h-4v-4h-4v4H7z" fill="#3a8ed2"/></svg></button>
  <button class="open" type="button" aria-label="画图"><svg viewBox="0 0 26 26"><path d="M2 17Q2 6 14 4q9 0 8 8-2 4-5 5 0 7-7 7-8 0-8-7z" fill="#d9e6ee"/><circle cx="8" cy="12" r="2" fill="#35a853"/><circle cx="13" cy="8" r="2" fill="#e8b83a"/><circle cx="7" cy="18" r="2" fill="#c43a3a"/><circle cx="12" cy="16" r="2" fill="#3a6fd0"/><path d="M14 24l8-20" stroke="#d97b2e" stroke-width="3"/><path d="M21 6l4-5" stroke="#8c5a3a" stroke-width="3"/></svg></button>
  <button type="button" aria-label="截图工具"><svg viewBox="0 0 26 26"><ellipse cx="13" cy="9" rx="10" ry="7" fill="#e4e4e4" stroke="#b9696a" transform="rotate(-25 13 9)"/><path d="M12 7l5 11M18 7l-4 11M6 9l7 2" stroke="#4d6b88" stroke-width="1.500"/><path d="M11 15q-7 1-6 5 3 2 7-5z" fill="none" stroke="#b33" stroke-width="2"/><path d="M15 16l-1 8M16 17l5 5" stroke="#3a7fb5" stroke-width="3"/></svg></button>
  <button type="button" aria-label="Firefox"><svg viewBox="0 0 26 26"><path d="M13 25C5 25 1 19 2 12q1-4 3-6l2 3q2-2 4-2-1-3 4-6 1 4 5 6 5 4 4 9-2 9-11 9z" fill="url(#gFox)"/><circle cx="13" cy="15" r="5" fill="#7a3fd0"/><path d="M8 12q5-3 9 1-5-1-5 3 1 3 5 2-7 5-9-1z" fill="#ffb534"/></svg></button>
  <button class="open" type="button" aria-label="测量"><svg viewBox="0 0 26 26"><rect x="2" y="2" width="22" height="22" rx="2" fill="#f2f5f8" stroke="#4a6fb0" stroke-width="2"/><path d="M4 12q9 2 18-8" fill="none" stroke="#3a62b8" stroke-width="3"/><path d="M6 21q11-1 15-14" fill="none" stroke="#f0a52c" stroke-width="3"/></svg></button>
  <button class="open" type="button" aria-label="录屏"><svg viewBox="0 0 26 26"><rect x="1" y="1" width="23" height="23" rx="5" fill="#fff"/><path d="M7 3l8 4-6 5z" fill="#e8384f"/><path d="M8 14q7-7 11-4-1 5-10 5z" fill="#e32a7b"/><path d="M5 18l2 4 2-4" fill="none" stroke="#e32a7b"/><rect x="12" y="14" width="13" height="11" rx="2" fill="#4aa6dc" stroke="#fff"/><path d="M17 17v6M20 17v6" stroke="#fff" stroke-width="2"/></svg></button>
  <button class="open focused" type="button" aria-label="3ds Max"><svg viewBox="0 0 26 26"><path d="M1 1h24v24H1z" fill="#e3eeee"/><path d="M8 4q10-3 10 3 0 3-3 4 4 1 3 5-2 5-11 3v-3q7 1 8-1 0-3-5-3v-3q5 0 5-2 0-2-7 0z" fill="#0b8088"/><path d="M14 22h8" stroke="#667" stroke-width="2"/></svg></button>
</div>
</div>

<!-- site mark over the lower right corner -->
<div class="mark">
  <svg class="mark-logo" width="132" height="108" viewBox="0 0 132 108">
    <path d="M9 46C30 14 66-2 96 2c30 4 40 24 33 44l-5 1c2-19-7-31-26-36C74 4 40 12 9 46z" fill="#9cc730"/>
    <path d="M64 21l26 13v40l-26 12zM102 42l18 10-18 16z" fill="#d6d8dc"/>
    <path d="M9 62l21-9v31Q14 80 9 62zM39 27l24-11v69H39zM76 49l21-10v32L76 82z" fill="url(#gBlue)"/>
    <path d="M5 55C3 78 18 92 46 91c38-2 76-27 86-48-4 36-50 66-86 64C8 104-10 82 5 55z" fill="#123f96"/>
  </svg>
  <div class="mark-text"><strong>土木工程网</strong><span>www.civilcn.com</span></div>
</div>

<script>
  const NS = 'http://www.w3.org/2000/svg';

  // construction grid of the orthographic viewports
  document.querySelectorAll('.grid').forEach(g => {
    const [ox, oy] = g.dataset.origin.split(',').map(Number);
    const step = Number(g.dataset.step);
    const box = g.ownerSVGElement.viewBox.baseVal;
    const add = (d, cls) => {
      const p = document.createElementNS(NS, 'path');
      p.setAttribute('d', d);
      p.setAttribute('class', cls);
      g.appendChild(p);
    };
    let d = '';
    for (let i = -60; i <= 60; i++) {
      const x = Math.round(ox + i * step) + 0.5;
      const y = Math.round(oy + i * step) + 0.5;
      if (x > box.x && x < box.x + box.width) d += `M${x} ${box.y}v${box.height}`;
      if (y > box.y && y < box.y + box.height) d += `M${box.x} ${y}h${box.width}`;
    }
    add(d, 'grid-line');
    add(`M${ox + 0.5} ${box.y}v${box.height}M${box.x} ${oy + 0.5}h${box.width}`, 'grid-axis');
  });

  // frames 0-100 on the track bar
  const ruler = document.getElementById('ruler');
  for (let i = 0; i <= 100; i++) {
    const cell = document.createElement('div');
    cell.className = 'tick' + (i % 5 === 0 ? ' major' : '') + (i === 0 ? ' now' : '');
    if (i % 5 === 0) cell.innerHTML = `<span>${i}</span>`;
    ruler.appendChild(cell);
  }
</script>
</body>
</html>
```

FILE: styles.css
```css
* { box-sizing: border-box; }
body {
  margin: 0; background: #fdfdfd; color: #e2e2e2;
  font-family: "Open Sans", "Noto Sans CJK SC", sans-serif; font-size: 12px;
}
button, input, select { font: inherit; color: inherit; }
button { background: none; border: 0; padding: 0; cursor: pointer; }
a { color: inherit; text-decoration: none; white-space: nowrap; }
p, h2, ul { margin: 0; padding: 0; }
svg { display: block; flex: none; }
.defs { position: absolute; width: 0; height: 0; }
.app { display: flex; flex-direction: column; height: 100vh; padding-bottom: 2px; background: #444; background-clip: content-box; }

.tri { width: 0; height: 0; border: 3px solid transparent; border-top: 4px solid #444; border-bottom: 0; flex: none; }
.tri-right { border: 4px solid transparent; border-left: 5px solid #444; border-right: 0; }
.tri-bar { border-width: 6px 5px 0; border-top-color: #333; }
.grip { width: 4px; margin: 3px 2px 3px 3px; border: solid #222; border-width: 0 1px; flex: none; }
.on { background: #5b86c4; border-radius: 2px; }

/* title and menu */
.header { display: flex; flex: none; height: 45px; background: #5a5a5a; }
.header-main { flex: 1; min-width: 0; }
.app-btn {
  display: grid; grid-template-columns: 30px 8px; align-content: center; align-items: center;
  width: 41px; height: 41px; border: 1px solid #111; color: #000;
  background: linear-gradient(#c4c4c4, #8a8a8a); font-size: 9px; font-weight: bold; line-height: 10px;
}
.app-btn .tri { grid-column: 2; grid-row: 1; }
.app-btn span { grid-column: 1 / 3; grid-row: 2; }
.titlebar { display: flex; height: 24px; background: #fff; border-bottom: 1px solid #333; color: #111; }
.quick, .info { display: flex; align-items: center; background: linear-gradient(#b0b0b0, #8e8e8e); }
.quick { gap: 6px; padding-left: 8px; width: 320px; }
.quick .tri { margin: 0 -1px; }
.quick .more { display: grid; place-items: center; width: 14px; height: 20px; }
.quick .more .tri { margin: 0; }
.quick .more::before { content: ""; width: 10px; height: 1px; background: #333; }
.sel { position: relative; display: block; flex: none; }
.sel select { appearance: none; width: 100%; height: 100%; border: 0; padding: 0 6px; border-radius: 0; background: #5b5b5b; display: block; }
.sel::after { content: ""; position: absolute; right: 7px; top: 8px; border: 3px solid transparent; border-top: 5px solid #ddd; border-bottom: 0; pointer-events: none; }
.sel-light { width: 128px; height: 21px; }
.sel-light select { background: #f4f4f4; border: 1px solid #555; padding: 0 4px; color: #000; }
.sel-light::after { border-top-color: #444; border-width: 3px 2px 0; right: 6px; top: 9px; }
.title { flex: 1; display: flex; gap: 16px; align-items: center; padding-left: 366px; font-size: 13px; white-space: nowrap; }
.info { width: 460px; gap: 5px; padding: 0 4px; }
.info input { width: 180px; height: 22px; border: 1px solid #111; background: #fff; padding: 0 3px; font-style: italic; font-size: 11px; }
.info input::placeholder { color: #555; }
.info .login { display: flex; align-items: center; gap: 4px; margin-right: auto; }
.info .exchange { margin-right: 8px; }
.winctl { display: flex; width: 163px; padding-left: 25px; }
.winctl button { width: 46px; display: grid; place-items: center; }
.menubar { display: flex; gap: 22px; height: 21px; padding-left: 15px; line-height: 21px; background: linear-gradient(#a0a0a0, #5c5c5c); border-bottom: 1px solid #3a3a3a; color: #fff; }
.menu-group { display: flex; gap: 25px; }
.menu-group-2 { gap: 22px; }

/* main toolbar */
.toolbar { display: flex; flex: none; gap: 2px; align-items: center; height: 39px; border-bottom: 1px solid #111; background: #444; }
.toolbar .grip { align-self: stretch; margin-right: 0; }
.toolbar button { width: 30px; height: 30px; display: grid; place-items: center; flex: none; border-radius: 3px; }
.toolbar button svg { width: 28px; height: 28px; }
.toolbar .sep { width: 1px; height: 17px; margin: 0 1px 0 2px; background: #1c1c1c; flex: none; }
.toolbar .sel { align-self: flex-start; margin-top: 5px; height: 19px; color: #ddd; }
.sel-filter { width: 68px; font-size: 11px; }
.sel-named { width: 118px; }
.sel-named select { padding: 0 3px; }
.toolbar-end { width: 2px; align-self: stretch; background: #161616; margin-left: 3px; }

/* ribbon */
.ribbon { display: flex; flex: none; background: #444; border-bottom: 1px solid #161616; }
.ribbon-main { flex: 1; }
.ribbon-tabs { display: grid; grid-template-columns: 56px repeat(4, 88px) 24px; height: 21px; padding-left: 14px; background: #535353; border-bottom: 1px solid #333; border-top: 1px solid #666; color: #bbb; }
.ribbon-tabs .current { width: 56px; margin-left: 8px; padding-left: 16px; color: #e6e6e6; background: #6a6a6a; border: 1px solid #333; border-bottom: 0; }
.ribbon-min { display: flex; align-items: center; gap: 5px; }
.ribbon-min b { display: grid; place-items: center; width: 14px; height: 8px; border-radius: 2px; background: #ddd; flex: none; }
.ribbon-min > .tri { border-top-color: #bbb; }
.ribbon-row { display: flex; height: 19px; background: linear-gradient(#474747, #3c3c3c); padding-left: 3px; }
.ribbon-row button { padding: 0 5px; border: 1px solid #505050; border-width: 0 1px 0 0; background: #484848; color: #eee; }

/* left side */
.main { display: flex; flex: 1; min-height: 0; padding-top: 1px; }
.strip { display: flex; flex-direction: column; justify-content: flex-end; gap: 11px; width: 40px; padding-bottom: 2px; background: #2f2f2f; border-top: 4px solid #3c3c3c; border-right: 1px solid #1c1c1c; }
.play { width: 19px; height: 19px; margin-left: 10px; display: grid; place-items: center; background: #505050; border-radius: 2px; }
.play .tri { border-left-color: #ddd; }
.layout { width: 36px; height: 44px; margin-left: 3px; display: grid; place-items: center; border-radius: 3px; background: linear-gradient(#4e6078, #3f86e0); }
.explorer { display: flex; flex-direction: column; width: 136px; border-right: 2px solid #141414; border-top: 3px solid #333; border-bottom: 1px solid #141414; padding: 4px 4px 0 2px; background: #444; }
.explorer-menu { display: flex; gap: 20px; padding-left: 15px; line-height: 22px; color: #f2f2f2; }
.chevrons { color: #5a5ab8; text-align: right; font-size: 14px; line-height: 14px; padding-right: 4px; }
.chevrons-low { padding-bottom: 17px; }
.explorer-body { display: flex; gap: 3px; flex: 1; padding-top: 14px; min-height: 0; }
.filters { display: flex; flex-direction: column; gap: 3px; width: 22px; padding-top: 4px; }
.filters button { height: 20px; display: grid; place-items: center; border-radius: 0; flex: none; }
.filters svg { width: 18px; height: 18px; }
.filters .hr { height: 1px; margin: 1px 2px; background: #888; }
.tree { display: flex; flex-direction: column; flex: 1; min-width: 0; border-left: 1px solid #505050; }
.tree-head { height: 22px; line-height: 20px; padding-left: 2px; border-top: 1px solid #555; color: #f2f2f2; white-space: nowrap; }
.tree ul { list-style: none; flex: 1; }
.tree li { display: flex; align-items: center; height: 18px; padding-left: 17px; }
.tree li svg { width: 16px; height: 16px; }
.tree .dot { width: 10px; height: 10px; border-radius: 50%; background: #ddd; margin: 0 4px 0 2px; flex: none; }
.tree li span { flex: 1; min-width: 0; overflow: hidden; padding-left: 4px; line-height: 18px; background: #505050; color: #eee; font-family: Roboto, sans-serif; }
.tree .selected span { background: #777; }
.hscroll { display: flex; height: 17px; background: #f0f0f0; justify-content: space-between; }
.hscroll i { width: 45px; background: #cdcdcd; margin: 1px auto 1px 1px; }

/* viewports */
.center { flex: 1; min-width: 0; display: flex; flex-direction: column; }
.viewports { flex: 1; min-height: 0; display: grid; grid-template: 1fr 1fr / 1fr 1fr; gap: 4px; background: #484848; }
.viewport { position: relative; min-width: 0; min-height: 0; overflow: hidden; border: 2px solid #3c3c3c; background: #353535; }
.viewport.active { border-color: #7b6c22; background: linear-gradient(#181818, #4c4c4c 90%); }
.vp-label { position: absolute; left: 4px; top: 5px; display: flex; gap: 7px; font-size: 11px; line-height: 16px; color: #d2d2d2; }
.scene { width: 100%; height: 100%; font-size: 11px; }
.grid-line { stroke: #5c5c5c; fill: none; }
.grid-axis { stroke: #000; fill: none; }
.cube-t { font-size: 16px; fill: #686c70; text-anchor: middle; }
.compass { font-size: 9px; fill: #b4b6b8; text-anchor: middle; }
.slider { display: flex; gap: 2px; height: 18px; padding: 0 1px 2px; flex: none; }
.slider button { width: 14px; background: #555; border-radius: 2px; line-height: 15px; color: #ccc; }
.slider .thumb { width: 124px; background: #606060; color: #e6e6e6; }
.track { display: flex; height: 26px; flex: none; border-top: 2px solid #141414; }
.track-icon { width: 16px; height: 16px; margin: 4px 21px 0 12px; }
.ruler { flex: 1; display: flex; padding-right: 50px; background: #2b2b2b; color: #bbb; }
.tick { flex: 1 1 0; min-width: 0; display: flex; justify-content: center; align-items: flex-end; background: linear-gradient(#777, #777) center top / 1px 11px no-repeat; }
.tick.major { background-size: 1px 100%; }
.tick span { background: #2b2b2b; line-height: 12px; margin-bottom: 1px; font-size: 11px; }
.tick.now { background: linear-gradient(#8b8026, #8b8026) center / 7px 100% no-repeat; }
.tick.now span { background: none; color: #e4dc80; }

/* command panel */
.panel { width: 204px; flex: none; padding: 0 5px 0 9px; font-size: 11px; background: #444; }
.panel svg { width: 20px; height: 20px; }
.panel-tabs { display: grid; grid-template-columns: repeat(6, 1fr); gap: 1px; height: 26px; margin: 0 2px 0 -5px; }
.panel-tabs button { display: grid; place-items: center; background: #3a3a3a; }
.panel-tabs .current { background: #444; }
.panel-cats { display: flex; gap: 2px; padding: 5px 0 7px 1px; }
.panel-cats button { width: 22px; height: 22px; display: grid; place-items: center; }
.sel-panel { height: 20px; margin-bottom: 6px; color: #ddd; }
.rollout { width: 182px; margin-bottom: 5px; padding-bottom: 5px; background: #505050; border-radius: 2px; }
.rollout-head { display: flex; align-items: center; gap: 6px; height: 19px; padding: 0 7px 0 6px; }
.rollout-head .tri { border-top-color: #ccc; }
.rollout h2 { flex: 1; font-size: 12px; color: #f4f4f4; }
.dots { width: 6px; height: 6px; background: radial-gradient(#999 1px, transparent 1px) 0 0 / 3px 3px; }
.autogrid { display: flex; align-items: center; gap: 4px; height: 20px; padding-left: 44px; color: #7c7c7c; }
.autogrid input { appearance: none; width: 10px; height: 10px; margin: 0; background: #484848; }
.types { display: grid; grid-template-columns: 1fr 1fr; gap: 4px 5px; padding: 0 10px 0 11px; }
.types button { height: 17px; line-height: 15px; background: #626262; border-radius: 2px; color: #dcdcdc; }
.namecolor { display: flex; gap: 4px; padding: 7px 14px 3px 17px; }
.namecolor input { width: 130px; height: 19px; border: 1px solid #4a4a4a; background: #5c5c5c; padding: 0 2px; }
.swatch { width: 17px; height: 20px; border: 1px solid #111; background: #f3dac5; }

/* status bar */
.status { display: grid; grid-template-columns: 105px 1fr 893px; flex: none; height: 51px; font-size: 11px; background: #444; }
.listener { display: flex; flex-direction: column; gap: 2px; padding: 2px 5px 3px 1px; border-right: 1px solid #1a1a1a; }
.listener input { height: 22px; width: 98px; border: 2px solid #fff; border-top-color: #777; border-left-color: #777; background: #fff; color: #000; padding: 0 3px; font: 12px "Liberation Mono", "Noto Sans CJK SC", monospace; }
.listener .pink { background: #ddc4c4; }
.messages { padding: 7px 0 0 4px; line-height: 16px; color: #eee; }
.messages p + p { margin-top: 9px; }
.coords { font-family: Roboto, "Noto Sans CJK SC", sans-serif; }
.coords-row { display: flex; align-items: center; height: 29px; padding-left: 2px; }
.coords-row svg { margin-right: 11px; }
.coords-row label { width: 12px; }
.spin { position: relative; margin-right: 3px; }
.spin input { display: block; width: 68px; height: 18px; border: 0; padding: 0 12px 0 3px; background: #5d5d5d; color: #ddd; }
.spin::before, .spin::after { content: ""; position: absolute; right: 3px; top: 4px; border: 3px solid transparent; border-bottom: 3px solid #ddd; border-top: 0; }
.spin::after { top: 9px; border-bottom: 0; border-top: 3px solid #ddd; }
.gridsize { margin-left: 3px; color: #f0f0f0; }
.coords-row-2 { height: 22px; gap: 6px; padding-left: 307px; }
.coords-row-2 button { width: 21px; height: 21px; display: grid; place-items: center; }
.coords-row-2 svg { margin: 0; }

/* taskbar */
.taskbar { display: flex; flex: none; height: 39px; background: linear-gradient(90deg, #1d2726, #34361f 30%, #3a3820); }
.taskbar button { width: 49px; display: grid; place-items: center; border-bottom: 3px solid transparent; padding-top: 3px; }
.taskbar button svg { width: 26px; height: 26px; }
.taskbar .start { width: 48px; }
.taskbar .start svg { width: 18px; height: 18px; }
.taskbar .open { border-image: linear-gradient(90deg, transparent 5px, #76b9ed 5px 44px, transparent 44px) 1; border-image-slice: 0 0 3 0; }
.taskbar .focused { background: #5d604c; border-image: none; border-bottom-color: #76b9ed; }
.search { display: flex; align-items: center; gap: 10px; width: 344px; padding-left: 12px; background: #f2f2f2; }
.search input { flex: 1; min-width: 0; border: 0; padding: 0; background: none; font-size: 14px; color: #222; }
.search input::placeholder { color: #333; }

/* site mark */
.mark { position: absolute; right: 0; bottom: 0; display: flex; width: 499px; height: 250px; padding: 70px 0 0 46px; background: #fdfdfd; color: #0a0a0a; }
.mark-text { display: flex; flex-direction: column; padding-top: 13px; font-style: italic; white-space: nowrap; }
.mark-text strong { margin-left: -4px; font-family: "Noto Sans CJK SC", sans-serif; font-weight: 900; font-size: 54px; line-height: 54px; }
.mark-text span { font-size: 36px; line-height: 36px; font-weight: 600; }
```
